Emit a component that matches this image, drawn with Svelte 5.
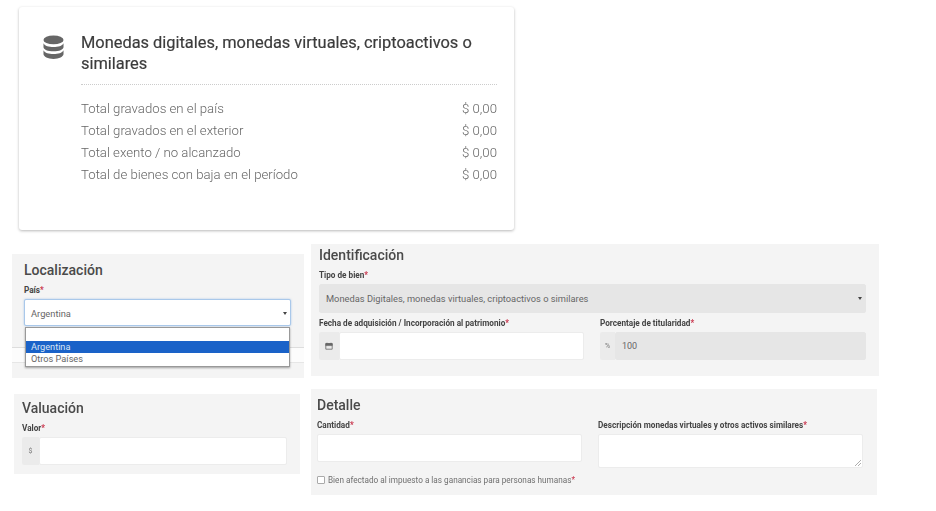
<script lang="ts">
  const totals = [
    'Total gravados en el país',
    'Total gravados en el exterior',
    'Total exento / no alcanzado',
    'Total de bienes con baja en el período',
  ];
</script>

<div class="page">
  <section class="card">
    <svg class="db" viewBox="0 0 22 22" preserveAspectRatio="none" aria-hidden="true">
      <ellipse cx="11" cy="4.500" rx="10.500" ry="4" fill="#666"/>
      <path d="M.5 7.500C2 10 6 11 11 11s9-1 10.500-3.500V11c0 2.400-4.700 4-10.500 4S.5 13.400.5 11z" fill="#666"/>
      <path d="M.5 14c1.500 2.500 5.500 3.500 10.500 3.500s9-1 10.500-3.500v3.500c0 2.400-4.700 4.500-10.500 4.500S.5 19.900.5 17.500z" fill="#666"/>
    </svg>
    <div class="card-body">
      <h2>Monedas digitales, monedas virtuales, criptoactivos o similares</h2>
      <div class="rows">
        {#each totals as t}
          <div class="row"><span>{t}</span><span>$ 0,00</span></div>
        {/each}
      </div>
    </div>
  </section>

  <div class="columns">
    <div class="left">
      <section class="panel loc">
        <h3>Localización</h3>
        <div class="label">País<i>*</i></div>
        <div class="select focus">Argentina<span class="caret"></span></div>
        <div class="strip"></div>
        <div class="menu">
          <div class="opt"></div>
          <div class="opt on">Argentina</div>
          <div class="opt">Otros Países</div>
        </div>
      </section>
      <section class="panel val">
        <h3>Valuación</h3>
        <div class="label">Valor<i>*</i></div>
        <div class="group">
          <span class="addon">$</span>
          <div class="input"></div>
        </div>
      </section>
    </div>

    <div class="right">
      <section class="panel ident">
        <h3>Identificación</h3>
        <div class="label">Tipo de bien<i>*</i></div>
        <div class="select disabled">Monedas Digitales, monedas virtuales, criptoactivos o similares<span class="caret"></span></div>
        <div class="two">
          <div>
            <div class="label">Fecha de adquisición / Incorporación al patrimonio<i>*</i></div>
            <div class="group">
              <span class="addon wide">
                <svg viewBox="0 0 10 10" width="8" height="8" aria-hidden="true">
                  <path d="M1 2h8v7H1z" fill="none" stroke="#666" stroke-width="1"/>
                  <path d="M1 2h8v2.500H1zM2.500 .8v1.500M7.500 .8v1.500" fill="#666" stroke="#666" stroke-width=".8"/>
                </svg>
              </span>
              <div class="input"></div>
            </div>
          </div>
          <div>
            <div class="label">Porcentaje de titularidad<i>*</i></div>
            <div class="group">
              <span class="addon narrow">%</span>
              <div class="input disabled">100</div>
            </div>
          </div>
        </div>
      </section>

      <section class="panel det">
        <h3>Detalle</h3>
        <div class="two">
          <div>
            <div class="label">Cantidad<i>*</i></div>
            <div class="input"></div>
            <div class="check"><span class="box"></span><span>Bien afectado al impuesto a las ganancias para personas humanas<i>*</i></span></div>
          </div>
          <div>
            <div class="label">Descripción monedas virtuales y otros activos similares<i>*</i></div>
            <div class="input area">
              <svg class="grip" viewBox="0 0 6 6" width="6" height="6" aria-hidden="true">
                <path d="M0 6 6 0M3 6l3-3" stroke="#999" stroke-width=".8"/>
              </svg>
            </div>
          </div>
        </div>
      </section>
    </div>
  </div>
</div>

<style>
  :global(body) {
    margin: 0;
    background: #fff;
  }
  .page {
    width: 936px;
    height: 511px;
    box-sizing: border-box;
    padding-top: 7px;
    overflow: hidden;
    font-family: Roboto, "Liberation Sans", sans-serif;
    filter: blur(0.7px);
  }
  .card {
    display: flex;
    gap: 17px;
    box-sizing: border-box;
    width: 495px;
    height: 223px;
    margin-left: 19px;
    padding: 25px 17px 0 24px;
    border-radius: 3px;
    box-shadow: 0 1px 3px rgba(0, 0, 0, 0.28);
  }
  .db {
    width: 21px;
    height: 24px;
    flex: none;
    margin-top: 3px;
  }
  .card-body {
    flex: 1;
  }
  h2 {
    margin: 0;
    padding-bottom: 10px;
    border-bottom: 1px dotted #ccc;
    font-size: 16.400px;
    font-weight: 400;
    line-height: 21px;
    color: #3c3c3c;
    -webkit-text-stroke: 0.2px #3c3c3c;
  }
  .rows {
    margin-top: 13px;
  }
  .row {
    display: flex;
    justify-content: space-between;
    font-size: 13.200px;
    font-weight: 300;
    line-height: 22px;
    color: #666;
  }
  .columns {
    display: flex;
    margin-top: 14px;
    margin-left: 12px;
  }
  .left {
    width: 292px;
    margin-right: 7px;
    padding-top: 10px;
  }
  .right {
    width: 568px;
  }
  .panel {
    background: #f4f4f4;
  }
  h3 {
    margin: 0;
    font-size: 14px;
    font-weight: 500;
    line-height: 18px;
    color: #4a4a4a;
  }
  .label {
    font-size: 8.200px;
    font-weight: 700;
    line-height: 10px;
    white-space: nowrap;
    color: #444;
  }
  i {
    font-style: normal;
    color: #c8324a;
  }
  .loc {
    position: relative;
    height: 124px;
    box-sizing: border-box;
    padding: 7px 13px 0 12px;
  }
  .loc .label {
    margin-top: 6px;
  }
  .select {
    position: relative;
    box-sizing: border-box;
    height: 27px;
    margin-top: 4px;
    padding-left: 6px;
    border: 1px solid #e4e4e4;
    border-radius: 2px;
    background: #fff;
    font-size: 9.300px;
    line-height: 27px;
    color: #666;
  }
  .focus {
    border-color: #a9c8ea;
    box-shadow: 0 0 2px rgba(90, 150, 220, 0.5);
  }
  .caret {
    position: absolute;
    right: 3px;
    top: 12px;
    border: 2.500px solid transparent;
    border-top: 3px solid #444;
    border-bottom: 0;
  }
  .strip {
    position: absolute;
    left: 0;
    right: 0;
    top: 93px;
    height: 16px;
    box-sizing: border-box;
    border-top: 1px solid #ddd;
    border-bottom: 1px solid #e6e6e6;
    background: #fcfcfc;
  }
  .menu {
    position: absolute;
    left: 13px;
    top: 73px;
    width: 265px;
    box-sizing: border-box;
    border: 1px solid #999;
    background: #fff;
    box-shadow: 0 1px 2px rgba(0, 0, 0, 0.35);
    font-size: 9.200px;
    color: #666;
  }
  .opt {
    height: 12.500px;
    padding-left: 5px;
    line-height: 11px;
  }
  .opt.on {
    background: #1a62c8;
    color: #d8e4f4;
  }
  .val {
    height: 80px;
    box-sizing: border-box;
    width: 286px;
    margin: 16px 0 0 2px;
    padding: 5px 13px 0 8px;
  }
  .val .label {
    margin-top: 6px;
  }
  .group {
    display: flex;
    margin-top: 4px;
  }
  .addon {
    display: flex;
    align-items: center;
    justify-content: center;
    flex: none;
    width: 17px;
    height: 28px;
    border-radius: 2px 0 0 2px;
    background: #ebebeb;
    font-size: 7px;
    color: #777;
  }
  .addon.wide {
    width: 20px;
  }
  .addon.narrow {
    width: 15px;
  }
  .input {
    position: relative;
    flex: 1;
    box-sizing: border-box;
    height: 28px;
    padding-left: 6px;
    border: 1px solid #ececec;
    border-radius: 2px;
    background: #fff;
    font-size: 9px;
    line-height: 27px;
    color: #666;
  }
  .input.disabled,
  .select.disabled {
    background: #e6e6e6;
    border-color: #e6e6e6;
  }
  .ident {
    height: 132px;
    box-sizing: border-box;
    padding: 2px 13px 0 8px;
  }
  .ident .label {
    margin-top: 6px;
  }
  .ident .select {
    height: 29px;
    margin-top: 4px;
    padding-left: 6px;
    line-height: 27px;
  }
  .two {
    display: grid;
    grid-template-columns: 265px 266px;
    column-gap: 16px;
    margin-top: 5px;
  }
  .ident .two .label {
    margin-top: 0;
  }
  .ident .group {
    margin-top: 4px;
  }
  .det {
    height: 106px;
    width: 566px;
    box-sizing: border-box;
    margin-top: 13px;
    padding: 7px 14px 0 6px;
  }
  .det .two {
    grid-template-columns: 265px 265px;
    margin-top: 6px;
  }
  .det .input {
    margin-top: 4px;
  }
  .det .area {
    height: 34px;
  }
  .grip {
    position: absolute;
    right: 1px;
    bottom: 1px;
  }
  .check {
    display: flex;
    align-items: center;
    gap: 3px;
    margin-top: 13px;
    font-size: 8.200px;
    white-space: nowrap;
    color: #6f6f6f;
  }
  .box {
    flex: none;
    width: 6px;
    height: 6px;
    border: 1px solid #aaa;
    border-radius: 1px;
    background: #fff;
  }
</style>
